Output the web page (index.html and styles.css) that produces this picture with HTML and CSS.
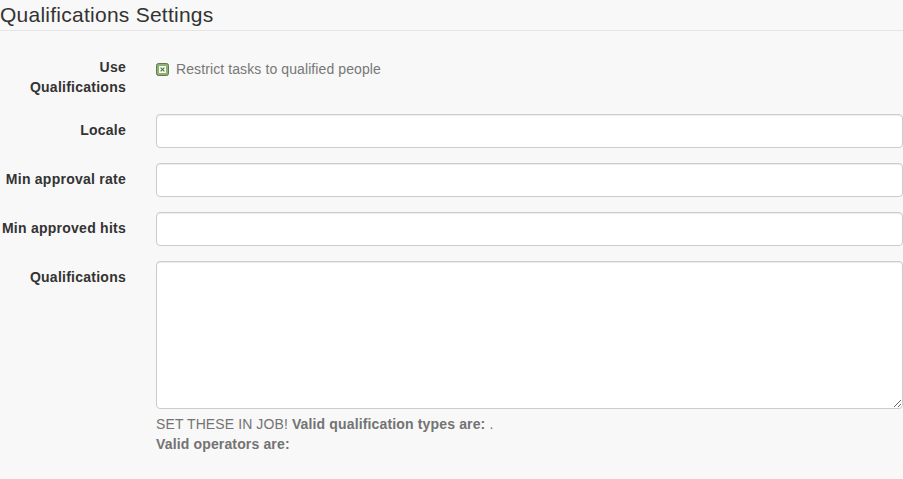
FILE: index.html
```html
<!DOCTYPE html>
<html>
<head>
<meta charset="utf-8">
<link rel="stylesheet" href="styles.css">
</head>
<body>
<form class="settings">
  <div class="legend">Qualifications Settings</div>
  <div class="group">
    <label class="label">Use Qualifications</label>
    <div class="control check-row">
      <span class="check-box"><svg width="13" height="13" viewBox="0 0 13 13"><rect x="0.5" y="0.5" width="12" height="12" rx="2" fill="#8fae78" stroke="#5c7d44"/><rect x="3" y="3" width="7" height="7" fill="#fbfdf9"/><path d="M4.6 4.6 L8.4 8.4 M8.4 4.6 L4.6 8.4" stroke="#557a3a" stroke-width="1.3"/></svg></span>
      <span class="check-text">Restrict tasks to qualified people</span>
    </div>
  </div>
  <div class="group">
    <label class="label">Locale</label>
    <div class="control"><input class="input" type="text"></div>
  </div>
  <div class="group">
    <label class="label">Min approval rate</label>
    <div class="control"><input class="input" type="text"></div>
  </div>
  <div class="group">
    <label class="label">Min approved hits</label>
    <div class="control"><input class="input" type="text"></div>
  </div>
  <div class="group">
    <label class="label">Qualifications</label>
    <div class="control">
      <textarea class="input textarea"></textarea>
      <p class="help">SET THESE IN JOB! <b>Valid qualification types are: </b>.<br><b>Valid operators are:</b></p>
    </div>
  </div>
</form>
</body>
</html>
```
FILE: styles.css
```css
html, body {
  margin: 0;
  padding: 0;
  background: #f8f8f8;
}
body {
  font-family: "Liberation Sans", Arial, sans-serif;
  font-size: 14px;
  line-height: 20px;
  letter-spacing: 0.1px;
  color: #333;
}
b {
  letter-spacing: 0.15px;
}
.settings {
  width: 903px;
}
.legend {
  font-size: 21px;
  line-height: 30px;
  letter-spacing: 0.25px;
  color: #333;
  border-bottom: 1px solid #e5e5e5;
  margin-bottom: 20px;
}
.group {
  display: flex;
  gap: 30px;
  margin-bottom: 15px;
}
.label {
  width: 125px;
  margin-left: 1px;
  flex: none;
  text-align: right;
  font-weight: bold;
  letter-spacing: 0.25px;
  padding-top: 6px;
  color: #333;
}
.control {
  flex: 1;
  min-width: 0;
}
.check-row {
  display: flex;
  align-items: flex-start;
  gap: 7px;
  padding-top: 8px;
  min-height: 40px;
}
.check-box {
  display: flex;
  width: 13px;
  height: 13px;
  margin-top: 4px;
}
.check-text {
  color: #777;
}
.input {
  display: block;
  box-sizing: border-box;
  width: 100%;
  height: 34px;
  margin: 0;
  padding: 6px 12px;
  font: inherit;
  border: 1px solid #ccc;
  border-radius: 4px;
  background: #fff;
  box-shadow: inset 0 1px 1px rgba(0,0,0,0.075);
}
.textarea {
  height: 148px;
  resize: vertical;
}
.help {
  margin: 5px 0 10px;
  color: #737373;
}
```
